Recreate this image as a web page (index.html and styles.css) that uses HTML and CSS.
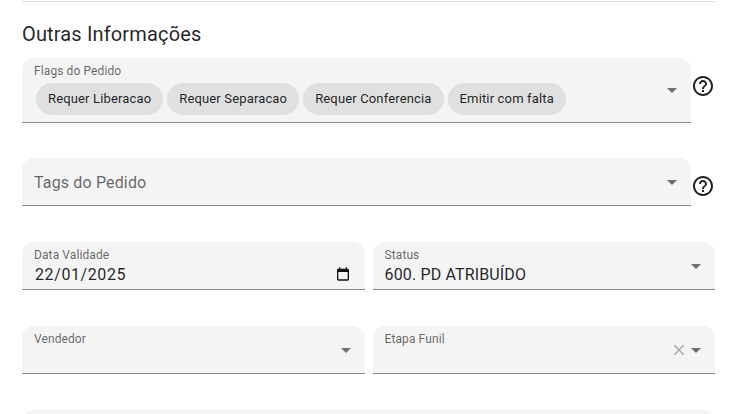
FILE: index.html
```html
<!DOCTYPE html>
<html lang="pt-BR">
<head>
    <meta charset="UTF-8">
    <meta name="viewport" content="width=device-width, initial-scale=1.0">
    <title>Outras Informações</title>
    <link rel="stylesheet" href="styles.css">
</head>
<body>
    <div class="container">
        <hr class="divider">
        <h2 class="section-title">Outras Informações</h2>

        <div class="help-row help-row-flags">
            <div class="field field-flags">
                <div class="field-body">
                    <div class="field-label">Flags do Pedido</div>
                    <div class="chips">
                        <span class="chip">Requer Liberacao</span>
                        <span class="chip">Requer Separacao</span>
                        <span class="chip">Requer Conferencia</span>
                        <span class="chip">Emitir com falta</span>
                    </div>
                </div>
                <svg class="icon-arrow" viewBox="0 0 24 24"><path d="M7 10l5 5 5-5z"/></svg>
            </div>
            <svg class="icon-help" viewBox="0 0 24 24"><path d="M11 18h2v-2h-2v2zm1-16C6.48 2 2 6.48 2 12s4.48 10 10 10 10-4.48 10-10S17.52 2 12 2zm0 18c-4.41 0-8-3.59-8-8s3.59-8 8-8 8 3.59 8 8-3.59 8-8 8zm0-14c-2.21 0-4 1.79-4 4h2c0-1.1.9-2 2-2s2 .9 2 2c0 2-3 1.75-3 5h2c0-2.25 3-2.5 3-5 0-2.21-1.79-4-4-4z"/></svg>
        </div>

        <div class="help-row help-row-tags">
            <div class="field">
                <div class="field-body">
                    <div class="field-placeholder">Tags do Pedido</div>
                </div>
                <svg class="icon-arrow" viewBox="0 0 24 24"><path d="M7 10l5 5 5-5z"/></svg>
            </div>
            <svg class="icon-help" viewBox="0 0 24 24"><path d="M11 18h2v-2h-2v2zm1-16C6.48 2 2 6.48 2 12s4.48 10 10 10 10-4.48 10-10S17.52 2 12 2zm0 18c-4.41 0-8-3.59-8-8s3.59-8 8-8 8 3.59 8 8-3.59 8-8 8zm0-14c-2.21 0-4 1.79-4 4h2c0-1.1.9-2 2-2s2 .9 2 2c0 2-3 1.75-3 5h2c0-2.25 3-2.5 3-5 0-2.21-1.79-4-4-4z"/></svg>
        </div>

        <div class="form-grid">
            <div class="field">
                <div class="field-body">
                    <div class="field-label">Data Validade</div>
                    <div class="field-value field-date">22/01/2025</div>
                </div>
                <svg class="icon-calendar" viewBox="0 0 24 24"><path d="M19 4h-1V2h-2v2H8V2H6v2H5c-1.1 0-2 .9-2 2v14c0 1.1.9 2 2 2h14c1.1 0 2-.9 2-2V6c0-1.1-.9-2-2-2zm0 16H5V9h14v11z"/></svg>
            </div>
            <div class="field">
                <div class="field-body">
                    <div class="field-label">Status</div>
                    <div class="field-value">600. PD ATRIBUÍDO</div>
                </div>
                <svg class="icon-arrow" viewBox="0 0 24 24"><path d="M7 10l5 5 5-5z"/></svg>
            </div>
            <div class="field">
                <div class="field-body">
                    <div class="field-label">Vendedor</div>
                </div>
                <svg class="icon-arrow" viewBox="0 0 24 24"><path d="M7 10l5 5 5-5z"/></svg>
            </div>
            <div class="field">
                <div class="field-body">
                    <div class="field-label">Etapa Funil</div>
                </div>
                <svg class="icon-clear" viewBox="0 0 24 24"><path d="M19 6.41 17.59 5 12 10.59 6.41 5 5 6.41 10.59 12 5 17.59 6.41 19 12 13.41 17.59 19 19 17.59 13.41 12z"/></svg>
                <svg class="icon-arrow" viewBox="0 0 24 24"><path d="M7 10l5 5 5-5z"/></svg>
            </div>
            <div class="field field-wide"></div>
        </div>
    </div>
</body>
</html>
```

FILE: styles.css
```css
html, body {
    height: 414px;
    overflow: hidden;
}
body {
    margin: 0;
    font-family: Roboto, 'Liberation Sans', sans-serif;
    background-color: #fff;
    color: rgba(0,0,0,0.87);
}
.container {
    padding: 1px 29px 0 22px;
}
.divider {
    margin: 0;
    border: none;
    border-top: 1px solid #e0e0e0;
}
.section-title {
    margin: 20px 0 12px;
    font-size: 20px;
    font-weight: 400;
    line-height: 24px;
    letter-spacing: 0.15px;
}
.help-row {
    display: flex;
    align-items: center;
}
.help-row .field {
    flex: 1;
}
.help-row-flags {
    margin-bottom: 35px;
}
.help-row-flags .icon-help {
    margin-bottom: 9px;
}
.help-row-tags {
    margin-bottom: 36px;
}
.help-row-tags .icon-help {
    margin-top: 8px;
}
.field {
    display: flex;
    align-items: center;
    box-sizing: border-box;
    height: 48px;
    padding-right: 7px;
    background-color: #f4f4f4;
    border-bottom: 1px solid #8c8c8c;
    border-radius: 12px 12px 0 0;
}
.field-flags {
    height: 65px;
}
.field-wide {
    grid-column: 1 / 3;
}
.field-body {
    flex: 1;
    min-width: 0;
    align-self: stretch;
    padding: 6px 0 0 12px;
}
.field-label {
    font-size: 12px;
    line-height: 14px;
    letter-spacing: 0.1px;
    color: rgba(0,0,0,0.6);
}
.field-placeholder {
    margin-top: 9px;
    font-size: 16px;
    line-height: 19px;
    letter-spacing: 0.15px;
    color: rgba(0,0,0,0.6);
}
.field-value {
    margin-top: 3px;
    font-size: 16px;
    line-height: 19px;
    letter-spacing: 0.15px;
}
.field-date {
    padding-left: 1px;
    letter-spacing: 0.6px;
}
.chips {
    display: flex;
    gap: 4px;
    margin: 5px 0 0 2px;
}
.chip {
    height: 32px;
    padding: 0 12px;
    border-radius: 16px;
    background-color: #e0e0e0;
    font-size: 13px;
    line-height: 32px;
    letter-spacing: 0.15px;
}
.form-grid {
    display: grid;
    grid-template-columns: 1fr 1fr;
    column-gap: 8px;
    row-gap: 36px;
}
.icon-arrow {
    flex: none;
    width: 24px;
    height: 24px;
    fill: rgba(0,0,0,0.54);
}
.icon-help {
    flex: none;
    width: 24px;
    height: 24px;
    fill: rgba(0,0,0,0.87);
}
.icon-calendar {
    flex: none;
    align-self: flex-end;
    width: 16px;
    height: 16px;
    margin: 0 7px 7px 0;
    fill: #111;
}
.icon-clear {
    flex: none;
    width: 18px;
    height: 18px;
    margin-right: -4px;
    fill: rgba(0,0,0,0.3);
}
```
